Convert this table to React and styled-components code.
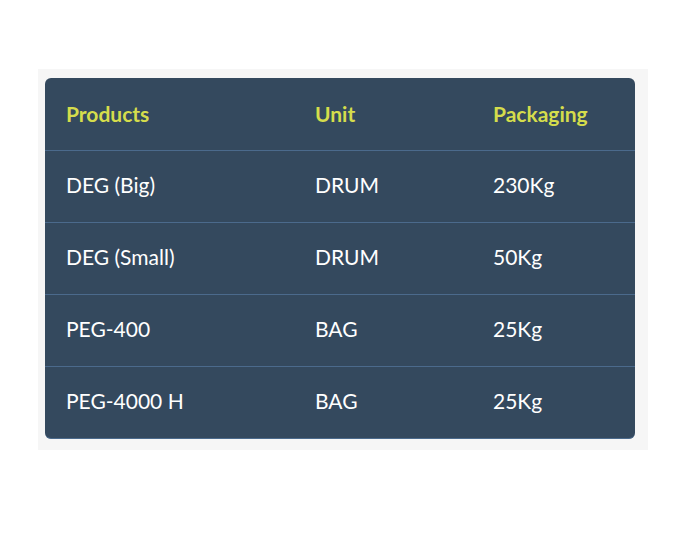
import React from "react";
import styled, { createGlobalStyle } from "styled-components";

const GlobalStyle = createGlobalStyle`
  body {
    margin: 0;
    background: #ffffff;
    font-family: "Lato", "Noto Sans", sans-serif;
  }
`;

const rows = [
  { product: "DEG (Big)", unit: "DRUM", packaging: "230Kg" },
  { product: "DEG (Small)", unit: "DRUM", packaging: "50Kg" },
  { product: "PEG-400", unit: "BAG", packaging: "25Kg" },
  { product: "PEG-4000 H", unit: "BAG", packaging: "25Kg" },
];

export default function App() {
  return (
    <Page>
      <GlobalStyle />
      <Wrapper>
        <Table>
          <colgroup>
            <col style={{ width: 249 }} />
            <col style={{ width: 178 }} />
            <col style={{ width: 163 }} />
          </colgroup>
          <thead>
            <tr>
              <Head>Products</Head>
              <Head>Unit</Head>
              <Head>Packaging</Head>
            </tr>
          </thead>
          <tbody>
            {rows.map((row) => (
              <Row key={row.product}>
                <Cell>{row.product}</Cell>
                <Cell>{row.unit}</Cell>
                <Cell>{row.packaging}</Cell>
              </Row>
            ))}
          </tbody>
        </Table>
      </Wrapper>
    </Page>
  );
}

const Page = styled.div`
  padding: 69px 0 0 38px;
  height: 550px;
  box-sizing: border-box;
`;

const Wrapper = styled.div`
  width: 590px;
  background: #f6f6f6;
  padding: 9px 13px 11px 7px;
`;

const Table = styled.table`
  width: 590px;
  border-collapse: separate;
  border-spacing: 0;
  background: #34495e;
  border-radius: 6px;
  overflow: hidden;
  table-layout: fixed;
  border-bottom: 1px solid #4b6a8c;
`;

const Head = styled.th`
  box-sizing: border-box;
  height: 73px;
  padding: 0 0 1px 21px;
  text-align: left;
  font-size: 21px;
  font-weight: 700;
  color: #d5dd4c;
  border-bottom: 1px solid #4b6a8c;
`;

const Row = styled.tr`
  td {
    border-bottom: 1px solid #4b6a8c;
  }
  &:last-child td {
    border-bottom: none;
    height: 71px;
  }
`;

const Cell = styled.td`
  box-sizing: border-box;
  height: 72px;
  padding: 0 0 5px 21px;
  font-size: 21px;
  color: #ffffff;
`;
